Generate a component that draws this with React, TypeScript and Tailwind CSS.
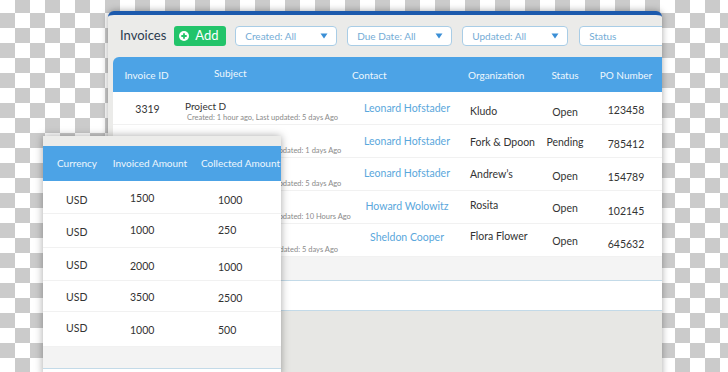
import React from "react";

type Row = {
  id: string;
  title: string;
  sub: string;
  contact: string;
  org: string;
  status: string;
  po: string;
  iCls: string;
  sCls: string;
  cCls: string;
  oCls: string;
  stCls: string;
  pCls: string;
};

const rows: Row[] = [
  { id: "3319", title: "Project D", sub: "Created: 1 hour ago, Last updated: 5 days Ago", contact: "Leonard Hofstader", org: "Kludo", status: "Open", po: "123458", iCls: "pt-[4px]", sCls: "pt-[6px]", cCls: "pt-[1px]", oCls: "pt-[7px]", stCls: "pt-[10px]", pCls: "pt-[5px]" },
  { id: "3318", title: "Project A", sub: "Created: 2 hours ago, Last updated: 1 days Ago", contact: "Leonard Hofstader", org: "Fork & Dpoon", status: "Pending", po: "785412", iCls: "pt-[4px]", sCls: "pt-[6px]", cCls: "pt-[2px]", oCls: "pt-[4px]", stCls: "pt-[4px]", pCls: "pt-[8px]" },
  { id: "3317", title: "Project C", sub: "Created: 3 hours ago, Last updated: 5 days Ago", contact: "Leonard Hofstader", org: "Andrew\u2019s", status: "Open", po: "154789", iCls: "pt-[4px]", sCls: "pt-[6px]", cCls: "pb-[1px]", oCls: "pt-[1px]", stCls: "pt-[6px]", pCls: "pt-[8px]" },
  { id: "3316", title: "Project B", sub: "Created: 5 hours ago, Last updated: 10 Hours Ago", contact: "Howard Wolowitz", org: "Rosita", status: "Open", po: "102145", iCls: "pt-[4px]", sCls: "pt-[6px]", cCls: "pb-[1px]", oCls: "pb-[3px]", stCls: "pt-[4px]", pCls: "pt-[9px]" },
  { id: "3315", title: "Project E", sub: "Created: 1 hour ago, Last updated: 5 days Ago", contact: "Sheldon Cooper", org: "Flora Flower", status: "Open", po: "645632", iCls: "pt-[4px]", sCls: "pt-[6px]", cCls: "pb-[5px]", oCls: "pb-[7px]", stCls: "pt-[4px]", pCls: "pt-[10px]" },
];

type ORow = { cur: string; inv: string; col: string; h: string; a: string; b: string; c: string };

const orows: ORow[] = [
  { cur: "USD", inv: "1500", col: "1000", h: "h-[33px]", a: "pt-[8px]", b: "pt-[3px]", c: "pt-[7px]" },
  { cur: "USD", inv: "1000", col: "250", h: "h-[34px]", a: "pt-[5px]", b: "pt-[1px]", c: "pt-[1px]" },
  { cur: "USD", inv: "2000", col: "1000", h: "h-[33px]", a: "pt-[3px]", b: "pt-[5px]", c: "pt-[7px]" },
  { cur: "USD", inv: "3500", col: "2500", h: "h-[31px]", a: "pt-[3px]", b: "pt-[3px]", c: "pt-[6px]" },
  { cur: "USD", inv: "1000", col: "500", h: "h-[35px]", a: "pb-[1px]", b: "pt-[3px]", c: "pt-[3px]" },
];

function Caret() {
  return (
    <svg width="8" height="6" viewBox="0 0 8 6" className="shrink-0">
      <path d="M0.5 0.5 L7.5 0.5 L4 5.5 Z" fill="#3b8fd6" />
    </svg>
  );
}

function Dropdown({ label, w, caret = true }: { label: string; w: string; caret?: boolean }) {
  return (
    <div className={`${w} h-[20px] shrink-0 bg-white border border-[#a9cde6] rounded-[4px] flex items-center justify-between pl-[9px] pr-[8px] text-[10px] text-[#74acd6]`}>
      <span>{label}</span>
      {caret && <Caret />}
    </div>
  );
}

function MainPanel() {
  return (
    <div className="w-[554px] h-[372px] bg-[#ebebe9] rounded-t-[6px] border-t-[4px] border-[#1c5aad] shadow-[0_0_7px_rgba(0,0,0,0.35)] flex flex-col overflow-hidden">
      <div className="h-[42px] shrink-0 flex items-center pl-[12px]">
        <span className="text-[13px] text-[#2b3b4f] mr-[8px]">Invoices</span>
        <div className="w-[52px] h-[20px] shrink-0 bg-[#22c46a] rounded-[3px] flex items-center pl-[5px] gap-[6px] text-white text-[13px] mr-[9px]">
          <svg width="10" height="10" viewBox="0 0 10 10">
            <circle cx="5" cy="5" r="5" fill="#ffffff" />
            <path d="M5 2.3 V7.7 M2.3 5 H7.7" stroke="#22c46a" strokeWidth="1.8" />
          </svg>
          <span>Add</span>
        </div>
        <Dropdown label="Created: All" w="w-[102px]" />
        <div className="w-[10px] shrink-0" />
        <Dropdown label="Due Date: All" w="w-[105px]" />
        <div className="w-[10px] shrink-0" />
        <Dropdown label="Updated: All" w="w-[106px]" />
        <div className="w-[11px] shrink-0" />
        <Dropdown label="Status" w="w-[100px]" caret={false} />
      </div>
      <div className="ml-[5px] flex-1 flex flex-col">
        <div className="h-[35px] shrink-0 bg-[#4ca3e6] rounded-tl-[6px] flex items-center pt-[1px] text-[10px] text-[#eef7fd]">
          <div className="w-[67px] text-center">Invoice ID</div>
          <div className="w-[165px] pl-[34px] pb-[3px]">Subject</div>
          <div className="w-[120px] pl-[7px]">Contact</div>
          <div className="w-[75px] pl-[3px]">Organization</div>
          <div className="w-[50px] text-center">Status</div>
          <div className="w-[72px] text-center">PO Number</div>
        </div>
        {rows.map((r) => (
          <div key={r.id} className="h-[33px] shrink-0 bg-white border-b border-[#f1f1f1] flex items-center text-[10.5px] text-[#333333]">
            <div className={`w-[67px] text-center pl-[2px] ${r.iCls}`}>{r.id}</div>
            <div className={`w-[165px] pl-[5px] flex flex-col leading-none ${r.sCls}`}>
              <span className="text-[10px] text-[#333333]">{r.title}</span>
              <span className="text-[7.5px] text-[#8a8a8a] pl-[2px] mt-[3px] whitespace-nowrap">{r.sub}</span>
            </div>
            <div className={`w-[120px] pl-[4px] text-center text-[#5aa7dc] ${r.cCls}`}>{r.contact}</div>
            <div className={`w-[75px] pl-[5px] whitespace-nowrap ${r.oCls}`}>{r.org}</div>
            <div className={`w-[50px] text-center ${r.stCls}`}>{r.status}</div>
            <div className={`w-[72px] text-center ${r.pCls}`}>{r.po}</div>
          </div>
        ))}
        <div className="h-[24px] shrink-0 bg-[#f4f4f4] border-b border-[#c3dae8]" />
        <div className="h-[30px] shrink-0 bg-white border-b border-[#c3dae8]" />
        <div className="flex-1 bg-[#e7e7e4]" />
      </div>
    </div>
  );
}

function Overlay() {
  return (
    <div className="absolute left-[43px] top-[136px] w-[238px] h-[240px] bg-white shadow-[0_0_8px_rgba(0,0,0,0.35)] flex flex-col font-['Lato',sans-serif]">
      <div className="h-[10px] shrink-0 bg-[#ececea]" />
      <div className="h-[35px] shrink-0 bg-[#4ca3e6] flex items-center text-[10px] text-[#eef7fd] whitespace-nowrap">
        <div className="w-[68px] text-center shrink-0">Currency</div>
        <div className="w-[78px] text-center shrink-0">Invoiced Amount</div>
        <div className="w-[92px] pl-[12px] shrink-0">Collected Amount</div>
      </div>
      {orows.map((r, i) => (
        <div key={i} className={`${r.h} shrink-0 border-b border-[#f1f1f1] flex items-center text-[10.5px] text-[#333333]`}>
          <div className={`w-[68px] shrink-0 pl-[23px] ${r.a}`}>{r.cur}</div>
          <div className={`w-[78px] shrink-0 pl-[19px] ${r.b}`}>{r.inv}</div>
          <div className={`w-[92px] shrink-0 pl-[29px] ${r.c}`}>{r.col}</div>
        </div>
      ))}
      <div className="h-[22px] shrink-0 bg-[#f3f3f3] border-b border-[#c3dae8]" />
      <div className="flex-1 bg-white" />
    </div>
  );
}

export default function App() {
  return (
    <div className="relative w-[728px] h-[372px] overflow-hidden font-['Lato',sans-serif] bg-[conic-gradient(#cbcbcb_25%,#ffffff_0_50%,#cbcbcb_0_75%,#ffffff_0)] bg-[length:30px_30px] bg-[position:0_-2px] pl-[108px] pt-[11px]">
      <MainPanel />
      <Overlay />
    </div>
  );
}
